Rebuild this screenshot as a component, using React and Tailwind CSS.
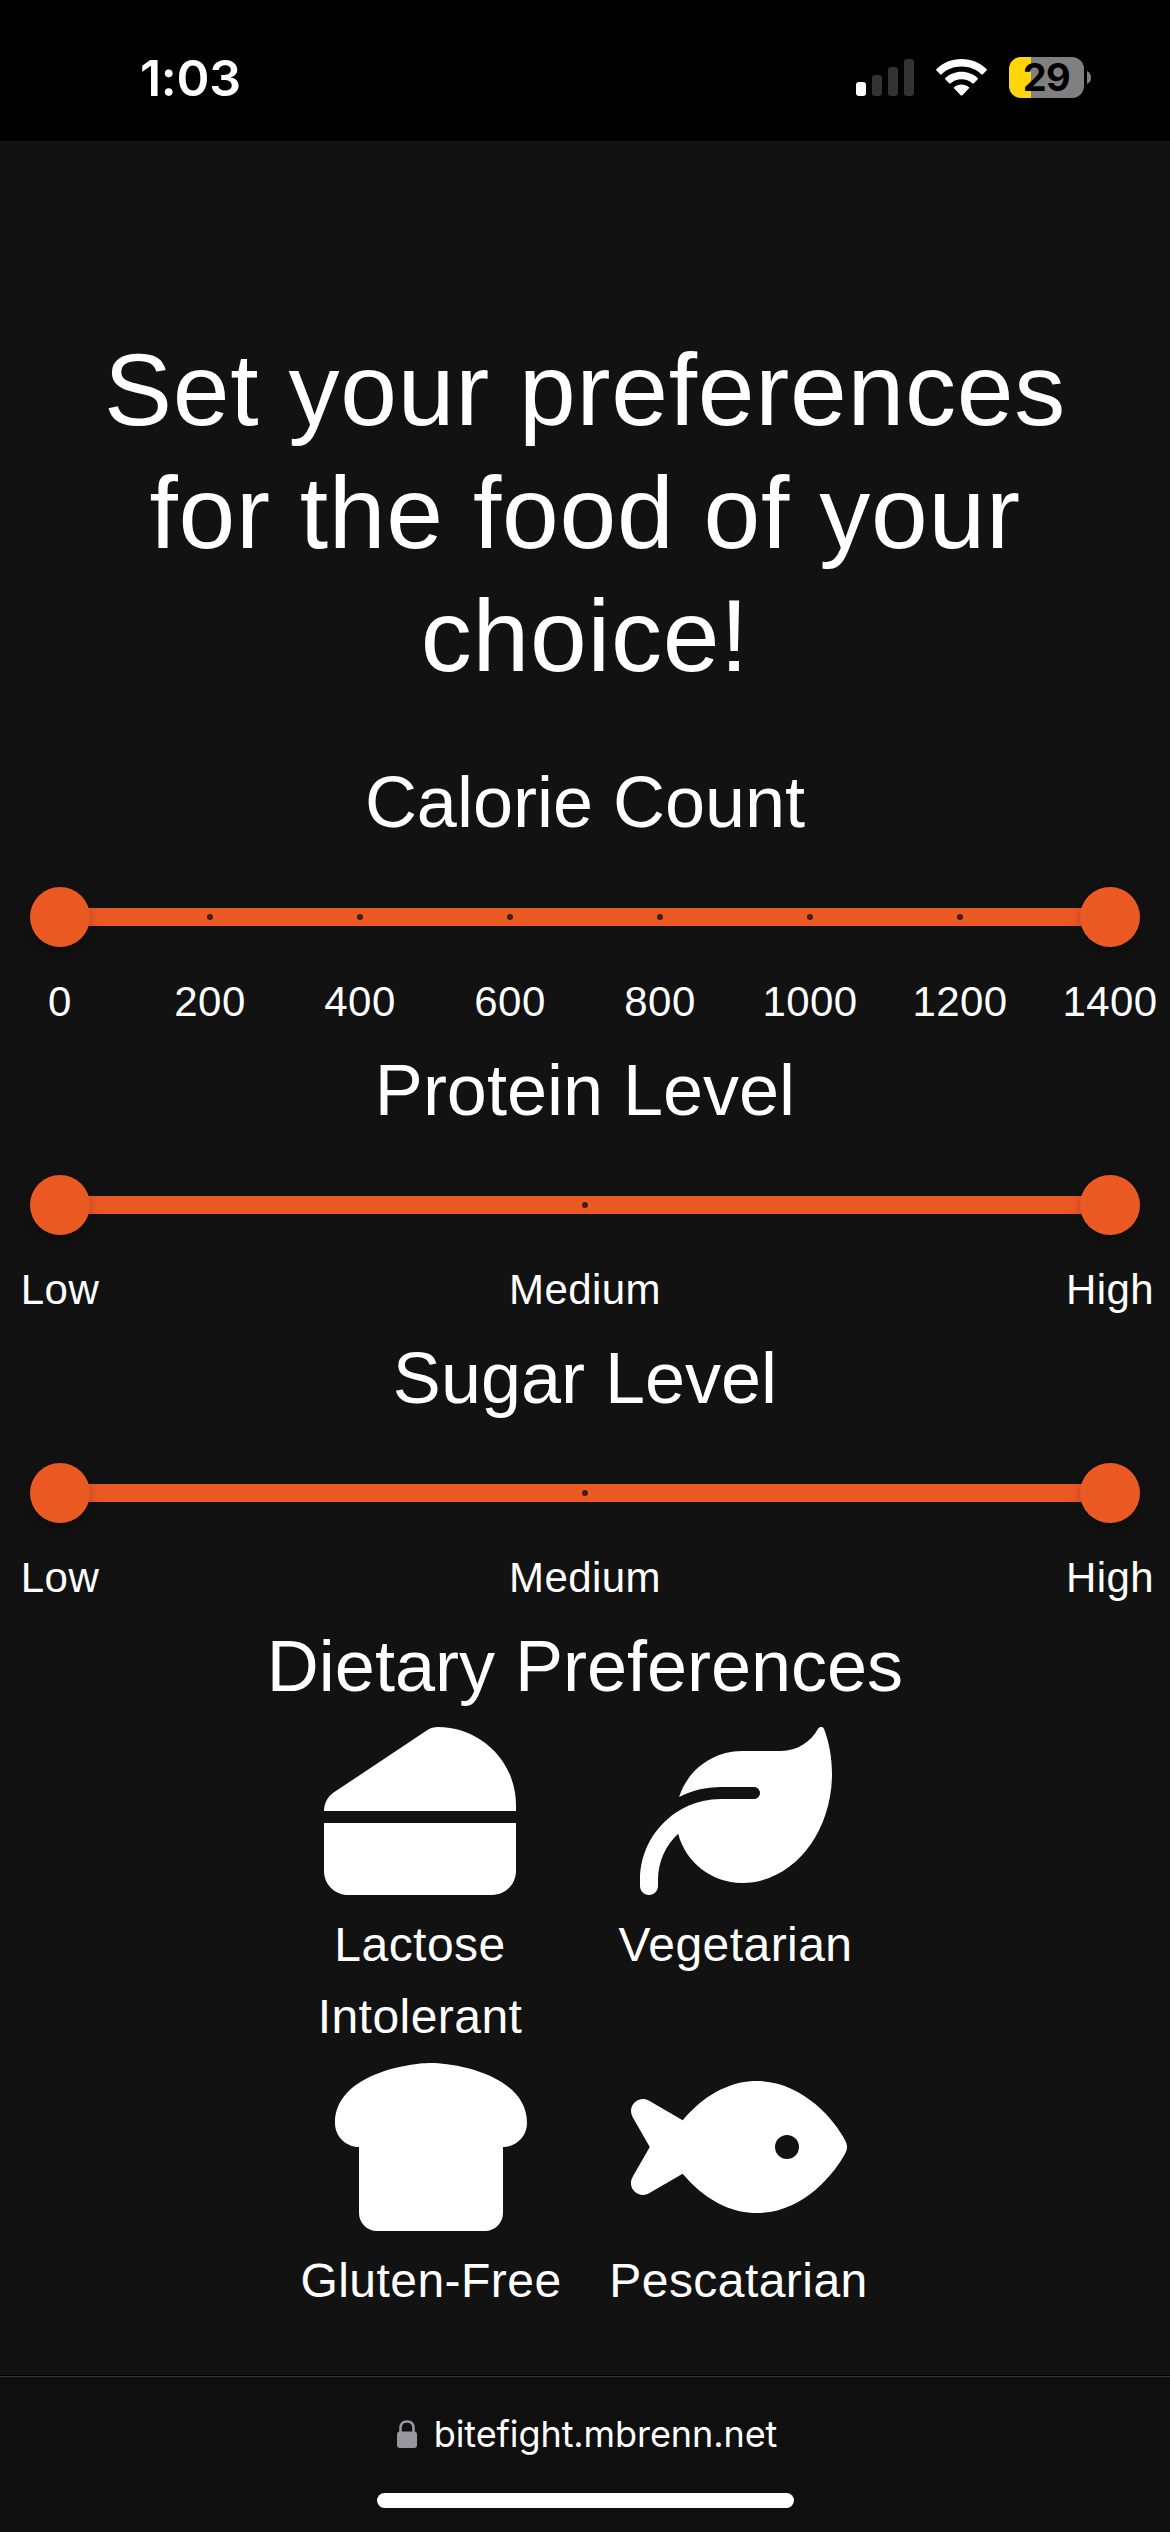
import { FaBreadSlice, FaCheese, FaFish, FaLeaf } from "react-icons/fa6";

const LEVELS = ["Low", "Medium", "High"];
const CALORIES = ["0", "200", "400", "600", "800", "1000", "1200", "1400"];

function StatusBar() {
  return (
    <header className="flex h-[141px] shrink-0 items-start justify-between bg-black pr-[79px] pl-[140px] font-['Inter',sans-serif]">
      <div className="mt-[48px] text-[50px] leading-[60px] font-semibold tracking-[-0.3px]">1:03</div>
      <div className="mt-[57px] flex items-start">
        <div className="mt-[2px] flex h-[37px] items-end gap-[6px]">
          <span className="h-[14px] w-[10px] rounded-[3px] bg-white" />
          <span className="h-[21px] w-[10px] rounded-[3px] bg-[#333]" />
          <span className="h-[29px] w-[10px] rounded-[3px] bg-[#333]" />
          <span className="h-[37px] w-[10px] rounded-[3px] bg-[#333]" />
        </div>
        <svg className="mt-[2px] ml-[22px] h-[37px] w-[51px]" viewBox="0 0 51 37" fill="white">
          <path d="M25.5 0C15.9 0 7.1 3.700.5 9.900Q-.2 10.700.5 11.500L4.200 15.200Q5 15.900 5.800 15.200C11 10.300 17.900 7.600 25.500 7.600S40 10.300 45.200 15.200Q46 15.900 46.800 15.200L50.500 11.500Q51.200 10.700 50.500 9.900C43.900 3.700 35.100 0 25.500 0Z" />
          <path d="M25.500 12.700C19.300 12.700 13.700 15 9.400 18.900Q8.600 19.700 9.400 20.500L13.200 24.200Q13.900 24.900 14.700 24.200C17.600 21.700 21.400 20.300 25.500 20.300S33.400 21.700 36.300 24.200Q37.100 24.900 37.800 24.200L41.600 20.500Q42.400 19.700 41.600 18.900C37.300 15 31.700 12.700 25.500 12.700Z" />
          <path d="M25.500 25.400C22.700 25.400 20.200 26.300 18.200 27.900Q17.400 28.700 18.200 29.500L24.600 36.200Q25.500 37 26.400 36.200L32.800 29.500Q33.600 28.700 32.800 27.900C30.800 26.300 28.300 25.400 25.500 25.400Z" />
        </svg>
        <div className="ml-[22px] flex h-[41px] w-[75px] items-center justify-center rounded-[12px] bg-[linear-gradient(to_right,#ffd60a_22px,#808080_22px)] text-[38px] leading-[41px] font-bold tracking-[-0.5px] text-black">
          29
        </div>
        <svg className="mt-[14px] ml-[3px] h-[13px] w-[4px]" viewBox="0 0 4 13" fill="#808080">
          <path d="M0 0Q4 2 4 6.500T0 13Z" />
        </svg>
      </div>
    </header>
  );
}

function Thumb({ className }) {
  return (
    <span
      className={`absolute top-[-21px] size-[60px] rounded-full bg-[#ec5a24] shadow-[0_9px_3px_-6px_rgba(0,0,0,0.2),0_6px_6px_0_rgba(0,0,0,0.14),0_3px_15px_0_rgba(0,0,0,0.12)] ${className}`}
    />
  );
}

function RangeSection({ title, marks }) {
  return (
    <section className="h-[288px]">
      <h2 className="text-center text-[72px] leading-[96px]">{title}</h2>
      <div className="relative mx-[60px] mt-[58px] flex h-[18px] items-center justify-between bg-[#ec5a24]">
        {marks.map((mark) => (
          <span key={mark} className="flex w-0 justify-center">
            <span className="size-[6px] shrink-0 rounded-full bg-[#3e2016]" />
          </span>
        ))}
        <Thumb className="left-[-30px]" />
        <Thumb className="right-[-30px]" />
      </div>
      <div className="mx-[60px] mt-[46px] flex justify-between text-[42px] leading-[60px] tracking-[0.01071em]">
        {marks.map((mark) => (
          <span key={mark} className="flex w-0 justify-center whitespace-nowrap">
            {mark}
          </span>
        ))}
      </div>
    </section>
  );
}

function Diet({ icon: Icon, iconWidth = "w-[192px]", label, className }) {
  return (
    <div className={`flex flex-col items-center text-center ${className}`}>
      <Icon className={`h-[192px] ${iconWidth}`} />
      <span className="mt-[2px] -mb-[2px] text-[48px] leading-[72px] tracking-[0.00938em]">{label}</span>
    </div>
  );
}

export default function App() {
  return (
    <div className="flex h-[2532px] w-[1170px] flex-col overflow-hidden bg-[#121212] font-['Liberation_Sans',sans-serif] text-white">
      <StatusBar />
      <main className="h-[2234px] shrink-0 pt-[188px]">
        <h1 className="mb-[56px] px-[48px] text-center text-[102px] leading-[123px] tracking-[0.00735em]">
          Set your preferences for the food of your choice!
        </h1>
        <RangeSection title="Calorie Count" marks={CALORIES} />
        <RangeSection title="Protein Level" marks={LEVELS} />
        <RangeSection title="Sugar Level" marks={LEVELS} />
        <section>
          <h2 className="mb-px text-center text-[72px] leading-[96px]">Dietary Preferences</h2>
          <div className="flex pl-[296px]">
            <Diet icon={FaCheese} label="Lactose Intolerant" className="w-[248px]" />
            <Diet icon={FaLeaf} label="Vegetarian" className="ml-[51px] w-[281px]" />
          </div>
          <div className="flex pl-[279px]">
            <Diet icon={FaBreadSlice} label="Gluten-Free" className="w-[304px]" />
            <Diet icon={FaFish} iconWidth="w-[216px]" label="Pescatarian" className="ml-[5px] w-[301px]" />
          </div>
        </section>
      </main>
      <footer className="flex grow flex-col items-center border-t border-black bg-[#0f0f0f]">
        <div className="h-px w-full bg-[#383838]" />
        <div className="mt-[33px] flex h-[48px] items-center pl-[4px] font-['Inter',sans-serif]">
          <svg className="mr-[17px] h-[28px] w-[20px]" viewBox="0 0 20 28">
            <rect x="0" y="11.500" width="20" height="16.500" rx="3" fill="#98979e" />
            <path d="M3.500 13V8Q3.500 1.500 10 1.500T16.500 8V13" fill="none" stroke="#98979e" strokeWidth="2.600" />
          </svg>
          <span className="text-[36px] leading-[48px] tracking-[-0.08px]">bitefight.mbrenn.net</span>
        </div>
        <div className="mt-[35px] h-[15px] w-[417px] rounded-full bg-white" />
      </footer>
    </div>
  );
}
